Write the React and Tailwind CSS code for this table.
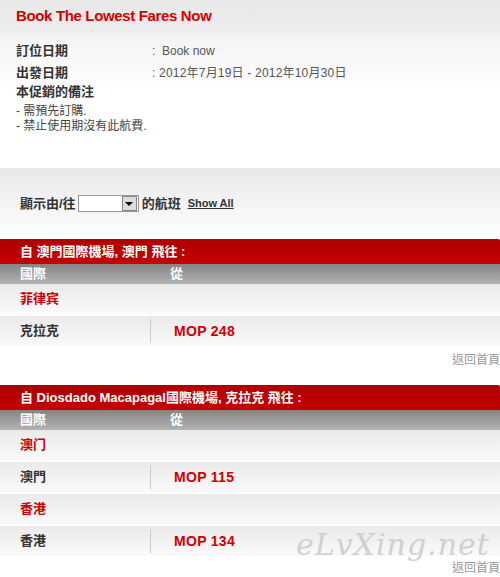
import React from 'react';

const cjk = "font-['Liberation_Sans','Noto_Sans_CJK_TC',sans-serif]";

function Row({ name, price, red }) {
  return (
    <div className="h-[30px] mb-[2px] flex items-stretch bg-gradient-to-b from-[#eaeaea] to-[#fafafa]">
      {red ? (
        <div className="pl-[20px] flex items-center text-[13px] font-bold text-[#cc0000]">{name}</div>
      ) : (
        <>
          <div className="w-[150px] pl-[20px] flex items-center text-[13px] font-bold text-[#333]">{name}</div>
          <div className="w-px my-[3px] bg-[#cccccc]" />
          <div className="pl-[23px] flex items-center text-[14px] font-bold tracking-[0.3px] text-[#d00000]">{price}</div>
        </>
      )}
    </div>
  );
}

function FareTable({ from, rows, backH }) {
  return (
    <div>
      <div className="h-[25px] flex items-center pl-[20px] rounded-tr-[2px] bg-gradient-to-b from-[#ad0000] to-[#c60000] text-[13px] font-bold text-white">
        {from}
      </div>
      <div className="h-[20px] flex items-center bg-gradient-to-b from-[#858585] to-[#b3b3b3] text-[13px] font-bold text-white">
        <div className="w-[170px] pl-[20px]">國際</div>
        <div>從</div>
      </div>
      {rows.map((r, i) => (
        <Row key={i} {...r} />
      ))}
      <div className={`${backH} text-right text-[12px] leading-[14px] text-[#999]`}>返回首頁</div>
    </div>
  );
}

export default function App() {
  return (
    <div className={`relative w-[500px] h-[577px] bg-white overflow-hidden ${cjk}`}>
      <div className="h-[33px] pl-[16px] flex items-center bg-gradient-to-b from-[#e8e8e8] to-[#ededed]">
        <h1 className="text-[15px] font-bold tracking-[-0.35px] text-[#d40000]">Book The Lowest Fares Now</h1>
      </div>

      <div className="h-[135px] pl-[16px] pt-[8px] bg-gradient-to-b from-[#f3f3f3] via-white via-[45%] to-white">
        <div className="h-[20px] flex items-center">
          <span className="w-[136px] text-[13px] font-bold text-[#333]">訂位日期</span>
          <span className="text-[12px] text-[#555]">:&nbsp;&nbsp;Book now</span>
        </div>
        <div className="h-[20px] mt-[2px] flex items-center">
          <span className="w-[136px] text-[13px] font-bold text-[#333]">出發日期</span>
          <span className="text-[12px] tracking-[0.2px] text-[#555]">: 2012年7月19日 - 2012年10月30日</span>
        </div>
        <div className="h-[18px] flex items-center text-[13px] font-bold text-[#333]">本促銷的備注</div>
        <div className="mt-[3px] text-[12px] leading-[15px] text-[#444]">
          <div>- 需預先訂購.</div>
          <div>- 禁止使用期沒有此航費.</div>
        </div>
      </div>

      <div className="h-[71px] pl-[20px] flex items-center bg-gradient-to-b from-[#e9e9e9] to-white">
        <span className="text-[13px] font-bold text-[#333]">顯示由/往</span>
        <div className="ml-[2px] w-[61px] h-[17px] flex justify-end items-center border border-[#999] bg-white">
          <div className="w-[15px] h-[15px] mr-px flex items-center justify-center bg-[#dcdcdc] border border-[#888]">
            <div className="w-0 h-0 border-l-[4px] border-r-[4px] border-t-[4px] border-l-transparent border-r-transparent border-t-black" />
          </div>
        </div>
        <span className="ml-[3px] text-[13px] font-bold text-[#333]">的航班</span>
        <a className="ml-[7px] text-[11px] font-bold text-[#333] underline">Show All</a>
      </div>

      <FareTable
        from="自 澳門國際機場, 澳門 飛往 :"
        backH="h-[37px] pt-[5px]"
        rows={[
          { name: '菲律宾', red: true },
          { name: '克拉克', price: 'MOP 248' },
        ]}
      />
      <FareTable
        from="自 Diosdado Macapagal國際機場, 克拉克 飛往 :"
        backH="pt-[3px]"
        rows={[
          { name: '澳门', red: true },
          { name: '澳門', price: 'MOP 115' },
          { name: '香港', red: true },
          { name: '香港', price: 'MOP 134' },
        ]}
      />

      <div className="absolute left-[296px] top-[522px] font-['DejaVu_Serif',serif] italic text-[30px] tracking-[1px] text-[#c8c8c8] opacity-80 pointer-events-none">
        eLvXing.net
      </div>
    </div>
  );
}
